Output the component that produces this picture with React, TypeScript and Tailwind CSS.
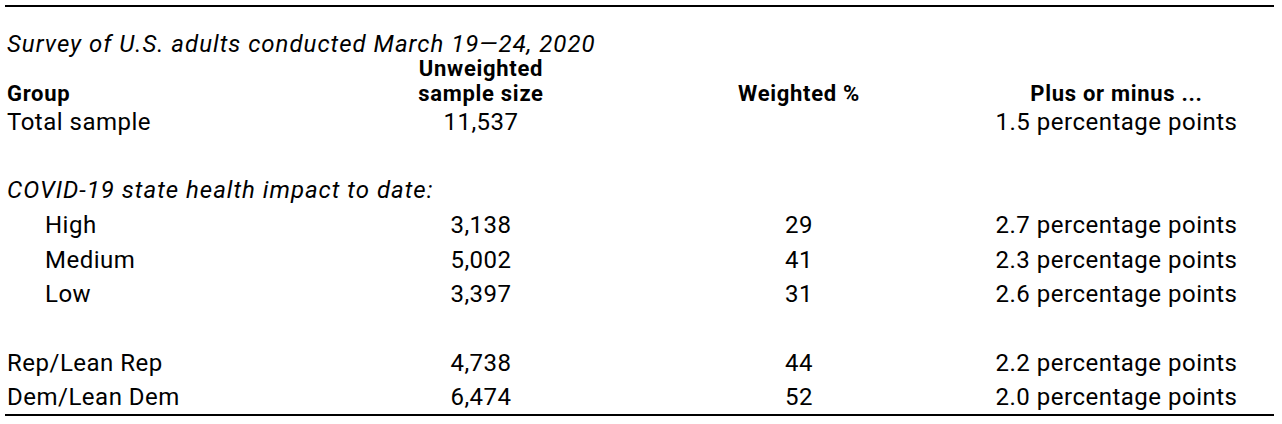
import React from 'react';

type Row = {
  label: string;
  n?: string;
  pct?: string;
  moe?: string;
  kind?: 'row' | 'indent' | 'note' | 'blank';
};

const rows: Row[] = [
  { label: 'Total sample', n: '11,537', pct: '', moe: '1.5 percentage points' },
  { label: '', kind: 'blank' },
  { label: 'COVID-19 state health impact to date:', kind: 'note' },
  { label: 'High', n: '3,138', pct: '29', moe: '2.7 percentage points', kind: 'indent' },
  { label: 'Medium', n: '5,002', pct: '41', moe: '2.3 percentage points', kind: 'indent' },
  { label: 'Low', n: '3,397', pct: '31', moe: '2.6 percentage points', kind: 'indent' },
  { label: '', kind: 'blank' },
  { label: 'Rep/Lean Rep', n: '4,738', pct: '44', moe: '2.2 percentage points' },
  { label: 'Dem/Lean Dem', n: '6,474', pct: '52', moe: '2.0 percentage points' },
];

const gridCols = 'grid grid-cols-[326px_300px_336px_1fr]';

export default function App() {
  return (
    <div className="bg-white w-[1282px] h-[424px] pl-[5px] pt-[5px] text-black font-['Roboto',sans-serif]">
      <div className="w-[1269px] border-t-2 border-b-2 border-black pt-[25px]">
        {/* Title */}
        <div className="pl-[2px] text-[24px] leading-[24px] italic tracking-[1px] whitespace-nowrap">
          Survey of U.S. adults conducted March 19—24, 2020
        </div>

        {/* Column headers */}
        <div className={`${gridCols} items-end text-[22px] leading-[25px] font-bold tracking-[0.7px]`}>
          <div className="pl-[2px]">Group</div>
          <div className="text-center">
            <div>Unweighted</div>
            <div>sample size</div>
          </div>
          <div className="text-center">Weighted %</div>
          <div className="text-center pr-[8px]">Plus or minus ...</div>
        </div>

        {/* Body rows */}
        <div className="-mt-[2px]">
          {rows.map((r, i) => {
            if (r.kind === 'blank') return <div key={i} className="h-[34.4px]" />;
            if (r.kind === 'note')
              return (
                <div key={i} className="h-[34.4px] flex items-center pl-[2px] text-[24px] italic tracking-[1px]">
                  {r.label}
                </div>
              );
            return (
              <div key={i} className={`${gridCols} h-[34.4px] items-center text-[24px] tracking-[0.5px]`}>
                <div className={r.kind === 'indent' ? 'pl-[40px]' : 'pl-[2px]'}>{r.label}</div>
                <div className="text-center">{r.n}</div>
                <div className="text-center">{r.pct}</div>
                <div className="text-center pr-[8px]">{r.moe}</div>
              </div>
            );
          })}
        </div>
      </div>
    </div>
  );
}
